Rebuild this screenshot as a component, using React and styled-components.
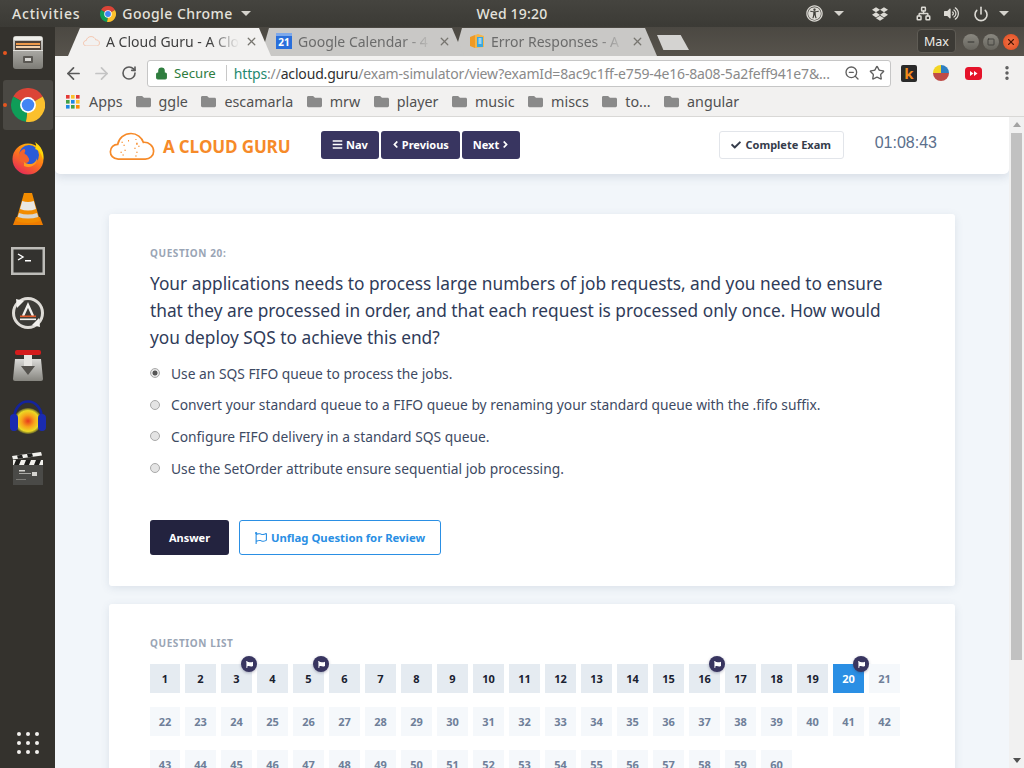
import React from 'react';
import styled, { createGlobalStyle } from 'styled-components';
import { FaAngleLeft, FaAngleRight, FaBars, FaCheck, FaDropbox, FaFlag, FaFolder, FaRegFlag, FaUniversalAccess, FaVolumeUp } from 'react-icons/fa';
import { ArrowLeft, ArrowRight, Lock, Minus, MoreVertical, Network, Power, RotateCw, Square, Star, X, ZoomOut } from 'lucide-react';

const UI_FONT = '"Noto Sans", "Open Sans", "Liberation Sans", sans-serif';

const GlobalStyle = createGlobalStyle`
  html, body {
    margin: 0;
    padding: 0;
    height: 100%;
    overflow: hidden;
    background: #34322d;
  }
  * { box-sizing: border-box; }
`;

// ---- small drawings ----

const ChromeLogo = ({ size }) => (
  <svg width={size} height={size} viewBox="0 0 24 24">
    <path d="M12 12 L1.6 6 A12 12 0 0 1 22.4 6 Z" fill="#db4437" />
    <path d="M12 12 L22.4 6 A12 12 0 0 1 10.5 23.9 Z" fill="#fbc02d" />
    <path d="M12 12 L10.5 23.9 A12 12 0 0 1 1.6 6 Z" fill="#0f9d58" />
    <circle cx="12" cy="12" r="5.6" fill="#fff" />
    <circle cx="12" cy="12" r="4.4" fill="#4285f4" />
  </svg>
);

const FilesIcon = () => (
  <svg width="34" height="36" viewBox="0 0 34 36">
    <defs>
      <linearGradient id="cab" x1="0" y1="0" x2="0" y2="1">
        <stop offset="0" stopColor="#d4d3cf" />
        <stop offset="0.45" stopColor="#a8a7a2" />
        <stop offset="1" stopColor="#7d7c76" />
      </linearGradient>
    </defs>
    <rect x="2" y="1" width="30" height="33" rx="3" fill="url(#cab)" />
    <rect x="3" y="2" width="28" height="3" fill="#eeeeea" />
    <rect x="4" y="6" width="26" height="9" fill="#4f4238" />
    <rect x="5" y="8" width="24" height="2" fill="#ef9a4a" />
    <rect x="5" y="11" width="24" height="2" fill="#f6d2ab" />
    <rect x="2" y="15" width="30" height="1" fill="#e4e3df" />
    <rect x="12" y="21" width="10" height="7" rx="1" fill="#5a5853" />
    <rect x="14" y="23" width="6" height="3" fill="#d8d7d3" />
  </svg>
);

const FirefoxIcon = () => (
  <svg width="34" height="35" viewBox="0 0 34 35">
    <defs>
      <linearGradient id="fx" x1="0.8" y1="0" x2="0.2" y2="1">
        <stop offset="0" stopColor="#ffcb00" />
        <stop offset="0.45" stopColor="#ff7a18" />
        <stop offset="1" stopColor="#e3245c" />
      </linearGradient>
    </defs>
    <circle cx="17" cy="19" r="15.5" fill="url(#fx)" />
    <circle cx="18" cy="15" r="10" fill="#2b5bd7" />
    <path d="M9 12 C13 7 15 9 14 12 C12 14 16 14 17 17 C21 22 14 25 10 22 C7 19 7 15 9 12 Z" fill="#f2622c" />
    <path d="M13 22 C18 26 25 24 26 18 C27 24 20 29 13 26 Z" fill="#ff9a1f" />
    <path d="M24 2 C30 6 34 13 32 20 C31 14 28 10 24 9 C26 7 25 4 24 2 Z" fill="#ffd60a" />
  </svg>
);

const VlcIcon = () => (
  <svg width="32" height="36" viewBox="0 0 32 36">
    <path d="M4 26 L1 34 H31 L28 26 Z" fill="#ef7d00" />
    <path d="M12 2 H20 L28 30 Q16 34 4 30 Z" fill="#f28c00" />
    <path d="M10.2 10 Q16 12 21.8 10 L24 18 Q16 21 8 18 Z" fill="#e9e7e2" />
    <path d="M7 22 Q16 25 25 22 L26.3 26 Q16 29 5.7 26 Z" fill="#d8d6d0" />
  </svg>
);

const TerminalIcon = () => (
  <svg width="34" height="28" viewBox="0 0 34 28">
    <rect width="34" height="28" fill="#bdbcb8" />
    <rect x="2.5" y="2.5" width="29" height="23" fill="#33322f" />
    <polyline points="7,7 12,10 7,13" fill="none" stroke="#fff" strokeWidth="1.4" />
    <rect x="14" y="13" width="6" height="1.5" fill="#fff" />
  </svg>
);

const UpdaterIcon = () => (
  <svg width="34" height="34" viewBox="0 0 34 34">
    <circle cx="17" cy="17" r="14.5" fill="#3c3b37" stroke="#dedcd7" strokeWidth="3" />
    <path d="M5 3 L13 5 L6 12 Z" fill="#f2f1ee" />
    <path d="M29 31 L21 29 L28 22 Z" fill="#f2f1ee" />
    <path d="M12 20 L17 9 L22 20" fill="none" stroke="#f2f1ee" strokeWidth="2.4" />
    <rect x="9" y="19.5" width="16" height="1.6" fill="#e05a2b" />
    <rect x="9" y="22.5" width="16" height="1.6" fill="#f2f1ee" />
  </svg>
);

const TransmissionIcon = () => (
  <svg width="32" height="34" viewBox="0 0 32 34">
    <defs>
      <linearGradient id="tr" x1="0" y1="0" x2="0" y2="1">
        <stop offset="0" stopColor="#dadad7" />
        <stop offset="1" stopColor="#86857f" />
      </linearGradient>
    </defs>
    <path d="M3 11 H29 L31 31 Q31 33 29 33 H3 Q1 33 1 31 Z" fill="url(#tr)" />
    <rect x="12" y="3" width="8" height="18" fill="#e6e5e1" />
    <rect x="3" y="2" width="26" height="5" rx="2" fill="#d41c1c" />
    <path d="M9 18 H23 L16 27 Z" fill="#55534e" />
  </svg>
);

const AudacityIcon = () => (
  <svg width="38" height="36" viewBox="0 0 38 36">
    <defs>
      <radialGradient id="au">
        <stop offset="0" stopColor="#e8391c" />
        <stop offset="0.45" stopColor="#f7a21a" />
        <stop offset="0.8" stopColor="#ecd924" />
        <stop offset="1" stopColor="#5b5a2a" />
      </radialGradient>
    </defs>
    <ellipse cx="19" cy="22" rx="14" ry="13" fill="url(#au)" />
    <path d="M5 22 C4 -4 34 -4 33 22" fill="none" stroke="#14239c" strokeWidth="2.6" />
    <rect x="1" y="15" width="8" height="17" rx="4" fill="#1a2bb0" />
    <rect x="29" y="15" width="8" height="17" rx="4" fill="#1a2bb0" />
  </svg>
);

const ClapperIcon = () => (
  <svg width="32" height="34" viewBox="0 0 32 34">
    <rect x="1" y="13" width="30" height="20" fill="#4a4a47" />
    <rect x="1" y="8" width="30" height="5" fill="#f1f0ec" />
    <path d="M4 8 H9 L7 13 H2 Z M14 8 H19 L17 13 H12 Z M24 8 H29 L27 13 H22 Z" fill="#1e1e1c" />
    <path d="M0 4 L29 0 L30 3.5 L1 7.5 Z" fill="#f1f0ec" />
    <path d="M5 3.4 L10 2.7 L11 6 L6 6.8 Z M15 2 L20 1.3 L21 4.6 L16 5.4 Z" fill="#1e1e1c" />
    <rect x="7" y="18" width="6" height="1.5" fill="#d5d4d0" />
    <rect x="7" y="21" width="12" height="1" fill="#aaa9a5" />
    <rect x="20" y="20" width="5" height="4" fill="#d5d4d0" />
    <rect x="4" y="27" width="10" height="1" fill="#7c7b77" />
  </svg>
);

const CloudOutline = ({ size, color, speckled }) => (
  <svg width={size} height={size * 0.62} viewBox="0 0 46 29">
    <path
      d="M9 27.5 C3.5 27.5 1 23.5 1 20 C1 15.5 4.5 12.5 8.5 12.5 C9.5 6.5 15 1.5 22 1.5 C28 1.5 33 5.5 34.5 10.5 C40 10 45 14 45 19.5 C45 24.5 41 27.5 36.5 27.5 Z"
      fill="none"
      stroke={color}
      strokeWidth="1.7"
    />
    {speckled && (
      <path
        d="M13 10 v1 M15 13 v1 M12 20 v1 M14 23 v1 M16 18 v1 M27 7 v1 M28 11 v2 M26 16 v1 M28 20 v1 M27 24 v1 M19 9 h1 M30 14 v1"
        stroke={color}
        strokeWidth="1.5"
      />
    )}
  </svg>
);

const CalendarFavicon = () => (
  <CalendarBox>21</CalendarBox>
);

const BoxFavicon = () => (
  <svg width="16" height="16" viewBox="0 0 16 16">
    <path d="M1 4 L6 2 L6 15 L1 13 Z" fill="#f09a24" />
    <path d="M6 2 L9 1 L15 3 L15 14 L6 15 Z" fill="#f5b54a" />
    <rect x="8" y="4" width="6" height="10" fill="#39a7e0" />
    <path d="M9.5 6 h3 M9.5 8 h3 M9.5 10 h3" stroke="#fff" strokeWidth="1" />
  </svg>
);

const AppsGrid = () => (
  <svg width="14" height="14" viewBox="0 0 14 14">
    {['#e53935', '#fbc02d', '#e53935', '#43a047', '#1e88e5', '#fbc02d', '#1e88e5', '#43a047', '#fb8c00'].map((c, i) => (
      <rect key={i} x={(i % 3) * 5} y={Math.floor(i / 3) * 5} width="3.6" height="3.6" fill={c} />
    ))}
  </svg>
);

const PieExtension = () => (
  <svg width="16" height="16" viewBox="0 0 16 16">
    <path d="M8 8 L0 8 A8 8 0 0 1 8 0 Z" fill="#f3d523" />
    <path d="M8 8 L8 0 A8 8 0 0 1 16 8 Z" fill="#2e7fc2" />
    <path d="M0 8 H16 A8 8 0 0 1 0 8 Z" fill="#bf4b47" />
  </svg>
);

const RedExtension = () => (
  <svg width="17" height="13" viewBox="0 0 17 13">
    <rect width="17" height="13" rx="3.5" fill="#e5132a" />
    <path d="M5 4 L8.5 6.5 L5 9 Z M9 4 L12.5 6.5 L9 9 Z" fill="#fff" />
  </svg>
);

const LOGO_LAUNCHER = [
  { key: 'files', icon: <FilesIcon />, running: true },
  { key: 'chrome', icon: <ChromeLogo size={34} />, running: true, active: true },
  { key: 'firefox', icon: <FirefoxIcon /> },
  { key: 'vlc', icon: <VlcIcon /> },
  { key: 'term', icon: <TerminalIcon /> },
  { key: 'updater', icon: <UpdaterIcon /> },
  { key: 'transmission', icon: <TransmissionIcon /> },
  { key: 'audacity', icon: <AudacityIcon /> },
  { key: 'clapper', icon: <ClapperIcon /> },
];

const BOOKMARKS = ['ggle', 'escamarla', 'mrw', 'player', 'music', 'miscs', 'to...', 'angular'];

const OPTIONS = [
  'Use an SQS FIFO queue to process the jobs.',
  'Convert your standard queue to a FIFO queue by renaming your standard queue with the .fifo suffix.',
  'Configure FIFO delivery in a standard SQS queue.',
  'Use the SetOrder attribute ensure sequential job processing.',
];

const FLAGGED = [3, 5, 16, 20];
const CURRENT = 20;
const QUESTIONS = Array.from({ length: 60 }, (_, i) => i + 1);

const App = () => (
  <>
    <GlobalStyle />
    <Desktop>
      <TopBar>
        <TopLeft>
          <TopLabel $spacing="0.8px">Activities</TopLabel>
          <AppMenu>
            <ChromeLogo size={16} />
            <TopLabel $spacing="0.45px">Google Chrome</TopLabel>
            <Caret />
          </AppMenu>
        </TopLeft>
        <TopLabel $spacing="0.2px">Wed 19:20</TopLabel>
        <TopRight>
          <FaUniversalAccess size={17} />
          <Caret />
          <TrayIcon $gap="28px"><FaDropbox size={16} /></TrayIcon>
          <TrayIcon $gap="28px"><Network size={15} strokeWidth={2.4} /></TrayIcon>
          <TrayIcon $gap="13px"><FaVolumeUp size={15} /></TrayIcon>
          <TrayIcon $gap="14px"><Power size={16} strokeWidth={2.4} /></TrayIcon>
          <TrayIcon $gap="8px"><Caret /></TrayIcon>
        </TopRight>
      </TopBar>

      <Workspace>
        <Launcher>
          {LOGO_LAUNCHER.map((item) => (
            <LauncherItem key={item.key} $active={item.active}>
              {item.running && <RunningDot />}
              {item.icon}
            </LauncherItem>
          ))}
          <AppGridDots>
            {Array.from({ length: 9 }, (_, i) => <span key={i} />)}
          </AppGridDots>
        </Launcher>

        <Browser>
          <TabStrip>
            <Tab $active $z={3}>
              <CloudOutline size={17} color="#f6b08c" />
              <TabTitle $active>A Cloud Guru - A Clo</TabTitle>
              <X size={13} color="#77756f" strokeWidth={2.4} />
            </Tab>
            <Tab $z={2}>
              <CalendarFavicon />
              <TabTitle>Google Calendar - 4</TabTitle>
              <X size={13} color="#77756f" strokeWidth={2.4} />
            </Tab>
            <Tab $z={1}>
              <BoxFavicon />
              <TabTitle>Error Responses - A</TabTitle>
              <X size={13} color="#77756f" strokeWidth={2.4} />
            </Tab>
            <NewTab />
            <MaxBadge>Max</MaxBadge>
            <WindowControls>
              <WindowButton><Minus size={10} color="#33322e" strokeWidth={2.4} /></WindowButton>
              <WindowButton><Square size={8} color="#33322e" strokeWidth={2.2} /></WindowButton>
              <WindowButton $close><X size={10} color="#4a1505" strokeWidth={2.6} /></WindowButton>
            </WindowControls>
          </TabStrip>

          <Toolbar>
            <NavIcon><ArrowLeft size={19} color="#5a5a5a" strokeWidth={2.2} /></NavIcon>
            <NavIcon><ArrowRight size={19} color="#c4c4c4" strokeWidth={2.2} /></NavIcon>
            <NavIcon><RotateCw size={16} color="#5a5a5a" strokeWidth={2.4} /></NavIcon>
            <Omnibox>
              <Lock size={13} color="#2f7d3f" fill="#2f7d3f" />
              <SecureLabel>Secure</SecureLabel>
              <OmniDivider />
              <Url>
                <UrlScheme>https</UrlScheme>://<UrlHost>acloud.guru</UrlHost>/exam-simulator/view?examId=8ac9c1ff-e759-4e16-8a08-5a2feff941e7&amp;...
              </Url>
              <ZoomOut size={16} color="#5f5f5f" />
              <Star size={16} color="#5f5f5f" />
            </Omnibox>
            <Extensions>
              <KBadge>k</KBadge>
              <PieExtension />
              <RedExtension />
              <MoreVertical size={18} color="#5a5a5a" strokeWidth={2.6} />
            </Extensions>
          </Toolbar>

          <BookmarkBar>
            <AppsGrid />
            <BookmarkApps>Apps</BookmarkApps>
            {BOOKMARKS.map((name) => (
              <Bookmark key={name}>
                <FaFolder size={15} color="#8a8a8a" />
                {name}
              </Bookmark>
            ))}
          </BookmarkBar>

          <Viewport>
            <Page>
              <SiteHeader>
                <Logo>
                  <CloudOutline size={46} color="#f68a29" speckled />
                  <LogoText>A CLOUD GURU</LogoText>
                </Logo>
                <HeaderNav>
                  <NavButton><FaBars size={11} />Nav</NavButton>
                  <NavButton><AngleLeft size={11} />Previous</NavButton>
                  <NavButton>Next<AngleRight size={11} /></NavButton>
                </HeaderNav>
                <CompleteButton><FaCheck size={10} />Complete Exam</CompleteButton>
                <Timer>01:08:43</Timer>
              </SiteHeader>

              <Content>
                <Card>
                  <Eyebrow>QUESTION 20:</Eyebrow>
                  <QuestionText>
                    Your applications needs to process large numbers of job requests, and you need to ensure that they are processed in order, and that each request is processed only once. How would you deploy SQS to achieve this end?
                  </QuestionText>
                  <OptionList>
                    {OPTIONS.map((option, i) => (
                      <Option key={option}>
                        <Radio $checked={i === 0} />
                        {option}
                      </Option>
                    ))}
                  </OptionList>
                  <Actions>
                    <AnswerButton>Answer</AnswerButton>
                    <FlagButton><FaRegFlag size={12} />Unflag Question for Review</FlagButton>
                  </Actions>
                </Card>

                <Card $list>
                  <Eyebrow>QUESTION LIST</Eyebrow>
                  <QuestionGrid>
                    {QUESTIONS.map((n) => (
                      <Cell key={n} $done={n < CURRENT} $current={n === CURRENT}>
                        {n}
                        {FLAGGED.includes(n) && <FlagBadge><FaFlag size={7} /></FlagBadge>}
                      </Cell>
                    ))}
                  </QuestionGrid>
                </Card>
              </Content>
            </Page>
            <Scrollbar>
              <ScrollArrow $up />
              <ScrollThumb />
              <ScrollArrow />
            </Scrollbar>
          </Viewport>
        </Browser>
      </Workspace>
    </Desktop>
  </>
);

// ---- desktop shell ----

const Desktop = styled.div`
  width: 1024px;
  height: 768px;
  display: flex;
  flex-direction: column;
  overflow: hidden;
  font-family: ${UI_FONT};
`;

const TopBar = styled.div`
  height: 27px;
  flex: none;
  display: grid;
  grid-template-columns: 1fr auto 1fr;
  align-items: center;
  padding: 0 12px;
  color: #e4e2dc;
  background: linear-gradient(#45443f, #3b3a35);
`;

const TopLeft = styled.div`
  display: flex;
  align-items: center;
  gap: 20px;
`;

const TopRight = styled.div`
  display: flex;
  align-items: center;
  justify-content: flex-end;
  color: #dcdad4;
  padding-right: 3px;

  > svg:first-child { margin-right: 9px; }
`;

const TrayIcon = styled.span`
  display: flex;
  margin-left: ${(p) => p.$gap};
`;

const AppMenu = styled.div`
  display: flex;
  align-items: center;
  gap: 6px;
`;

const TopLabel = styled.span`
  font-size: 14px;
  font-weight: 500;
  letter-spacing: ${(p) => p.$spacing};
`;

const Caret = styled.span`
  width: 0;
  height: 0;
  margin-left: 2px;
  border-left: 5px solid transparent;
  border-right: 5px solid transparent;
  border-top: 5px solid #d5d3cd;
`;

const Workspace = styled.div`
  flex: 1;
  min-height: 0;
  display: flex;
`;

const Launcher = styled.div`
  width: 55px;
  flex: none;
  display: flex;
  flex-direction: column;
  align-items: center;
  padding-bottom: 14px;
  background: #34322d;
`;

const LauncherItem = styled.div`
  position: relative;
  width: 50px;
  height: 50px;
  margin: 1px 0;
  display: flex;
  align-items: center;
  justify-content: center;
  border-radius: 3px;
  background: ${(p) => (p.$active ? '#4a4843' : 'transparent')};
`;

const RunningDot = styled.span`
  position: absolute;
  left: 0;
  top: 23px;
  width: 4px;
  height: 4px;
  border-radius: 50%;
  background: #e6561f;
`;

const AppGridDots = styled.div`
  margin-top: auto;
  display: grid;
  grid-template-columns: repeat(3, 4px);
  gap: 5px;

  span {
    width: 4px;
    height: 4px;
    border-radius: 50%;
    background: #f2f1ee;
  }
`;

// ---- browser chrome ----

const Browser = styled.div`
  flex: 1;
  min-width: 0;
  display: flex;
  flex-direction: column;
`;

const TabStrip = styled.div`
  height: 29px;
  flex: none;
  display: flex;
  align-items: flex-end;
  padding-left: 13px;
  background: linear-gradient(#4b4842, #57534c);
`;

const Tab = styled.div`
  position: relative;
  z-index: ${(p) => p.$z};
  width: 203px;
  height: 28px;
  flex: none;
  display: flex;
  align-items: center;
  gap: 6px;
  padding: 0 13px 2px 15px;
  margin-right: -10px;
  background: ${(p) => (p.$active ? '#f2f1f0' : '#c9c8c6')};
  clip-path: ${(p) =>
    p.$active
      ? 'polygon(0 100%, 12px 0, calc(100% - 12px) 0, 100% 100%)'
      : 'polygon(0 100%, 8px 0, calc(100% - 12px) 0, 100% 100%)'};
`;

const TabTitle = styled.span`
  flex: 1;
  min-width: 0;
  overflow: hidden;
  white-space: nowrap;
  font-size: 14px;
  color: ${(p) => (p.$active ? '#3f3f3f' : '#6b6b6b')};
  mask-image: linear-gradient(to right, #000 78%, transparent 100%);
`;

const CalendarBox = styled.span`
  width: 16px;
  height: 16px;
  flex: none;
  display: flex;
  align-items: flex-end;
  justify-content: center;
  font-size: 10px;
  font-weight: 700;
  line-height: 13px;
  color: #fff;
  background: #2a6fdb;
  border-top: 3px solid #7fa9ea;
`;

const NewTab = styled.div`
  width: 32px;
  height: 15px;
  flex: none;
  margin: 0 0 6px 10px;
  background: #d4d3d1;
  clip-path: polygon(0 0, 74% 0, 100% 100%, 20% 100%);
`;

const MaxBadge = styled.div`
  margin: 0 7px 3px auto;
  width: 39px;
  height: 24px;
  display: flex;
  align-items: center;
  justify-content: center;
  font-size: 12.5px;
  color: #eeece7;
  background: #3c3a35;
  border: 1px solid #5f5c55;
  border-radius: 4px;
`;

const WindowControls = styled.div`
  display: flex;
  gap: 4px;
  margin: 0 5px 6px 0;
`;

const WindowButton = styled.span`
  width: 16px;
  height: 16px;
  display: flex;
  align-items: center;
  justify-content: center;
  border-radius: 50%;
  background: ${(p) => (p.$close ? 'radial-gradient(#f4764a, #e0491d)' : 'linear-gradient(#8a8880, #66645d)')};
`;

const Toolbar = styled.div`
  height: 34px;
  flex: none;
  display: flex;
  align-items: center;
  padding-left: 4px;
  background: #f2f1f0;
`;

const NavIcon = styled.span`
  width: 28px;
  flex: none;
  display: flex;
  justify-content: center;
`;

const Omnibox = styled.div`
  width: 744px;
  height: 27px;
  flex: none;
  margin-left: 4px;
  display: flex;
  align-items: center;
  padding: 0 5px 0 7px;
  background: #fff;
  border: 1px solid #c6c6c6;
  border-radius: 3px;

  svg:last-child { margin-left: 9px; }
`;

const SecureLabel = styled.span`
  margin-left: 6px;
  font-size: 13.2px;
  color: #2f7d3f;
`;

const OmniDivider = styled.span`
  width: 1px;
  height: 16px;
  margin: 0 7px 0 10px;
  background: #c8c8c8;
`;

const Url = styled.span`
  flex: 1;
  min-width: 0;
  overflow: hidden;
  white-space: nowrap;
  font-size: 14px;
  letter-spacing: -0.17px;
  color: #8a8a8a;
`;

const UrlScheme = styled.span`
  color: #1f8a70;
`;

const UrlHost = styled.span`
  color: #303030;
`;

const Extensions = styled.div`
  flex: 1;
  display: flex;
  align-items: center;
  justify-content: space-between;
  padding: 0 8px 0 10px;
`;

const KBadge = styled.span`
  width: 16px;
  height: 17px;
  display: flex;
  align-items: center;
  justify-content: center;
  font-size: 15px;
  font-weight: 700;
  line-height: 1;
  color: #f28a1c;
  background: #2a2a2a;
  border-radius: 2px;
`;

const BookmarkBar = styled.div`
  height: 27px;
  flex: none;
  display: flex;
  align-items: center;
  padding: 0 0 3px 11px;
  font-size: 14.3px;
  color: #505050;
  background: #f2f1f0;
  border-bottom: 1px solid #d9d8d6;
`;

const BookmarkApps = styled.span`
  margin: 0 13px 0 9px;
`;

const Bookmark = styled.span`
  display: flex;
  align-items: center;
  gap: 8px;
  margin-right: 13.5px;
`;

// ---- page ----

const Viewport = styled.div`
  flex: 1;
  min-height: 0;
  display: flex;
`;

const Page = styled.div`
  width: 954px;
  flex: none;
  overflow: hidden;
  background: #f2f6fa;
`;

const SiteHeader = styled.div`
  height: 57px;
  display: flex;
  align-items: center;
  padding: 0 72px 2px 54px;
  background: #fff;
  border-radius: 0 0 5px 5px;
  box-shadow: 0 3px 10px rgba(70, 90, 120, 0.16);
`;

const Logo = styled.div`
  width: 212px;
  flex: none;
  display: flex;
  align-items: center;
  gap: 8px;
  padding-top: 4px;
`;

const LogoText = styled.span`
  font-family: "Open Sans", sans-serif;
  font-size: 17px;
  font-weight: 700;
  letter-spacing: -0.15px;
  color: #f68a29;
`;

const HeaderNav = styled.div`
  display: flex;
  gap: 2px;
`;

const NavButton = styled.button`
  height: 28px;
  display: flex;
  align-items: center;
  gap: 3px;
  padding: 0 11px;
  font-family: ${UI_FONT};
  font-size: 11px;
  font-weight: 700;
  color: #fff;
  background: #383560;
  border: none;
  border-radius: 3px;
`;

// the angle glyphs sit in a square box with a lot of air round them
const AngleLeft = styled(FaAngleLeft)`
  margin: 0 -2px;
`;

const AngleRight = styled(FaAngleRight)`
  margin: 0 -2px;
`;

const CompleteButton = styled.button`
  width: 125px;
  height: 28px;
  margin-left: auto;
  display: flex;
  align-items: center;
  justify-content: center;
  gap: 4px;
  font-family: ${UI_FONT};
  font-size: 11px;
  font-weight: 700;
  color: #353c4b;
  background: #fff;
  border: 1px solid #e2e5ea;
  border-radius: 3px;
`;

const Timer = styled.span`
  margin: 0 0 3px 31px;
  font-family: "Liberation Sans", sans-serif;
  font-size: 16px;
  color: #5b6f8c;
`;

const Content = styled.div`
  display: flex;
  flex-direction: column;
  gap: 18px;
  padding: 40px 54px 0;
`;

const Card = styled.section`
  height: ${(p) => (p.$list ? '220px' : '372px')};
  padding: 33px 41px 0;
  background: #fff;
  border-radius: 3px;
  box-shadow: 0 2px 8px rgba(70, 90, 120, 0.13);
`;

const Eyebrow = styled.div`
  font-size: 10px;
  font-weight: 700;
  line-height: 12px;
  letter-spacing: 0.6px;
  color: #9aa5b5;
`;

const QuestionText = styled.p`
  margin: 11px 0 0;
  font-size: 17.3px;
  line-height: 27px;
  color: #2f3b59;
`;

const OptionList = styled.div`
  margin-top: 12px;
  display: flex;
  flex-direction: column;
  gap: 11.7px;
`;

const Option = styled.label`
  height: 20px;
  display: flex;
  align-items: center;
  gap: 11px;
  font-size: 13.8px;
  color: #3d4a63;
`;

const Radio = styled.span`
  width: 10px;
  height: 10px;
  flex: none;
  border-radius: 50%;
  border: 1px solid #a9a9a9;
  background: ${(p) => (p.$checked ? 'radial-gradient(#555 0 2.2px, #e2e2e2 2.8px)' : '#e4e4e4')};
`;

const Actions = styled.div`
  margin-top: 42px;
  display: flex;
  gap: 10px;
`;

const AnswerButton = styled.button`
  width: 79px;
  height: 35px;
  font-family: ${UI_FONT};
  font-size: 11px;
  font-weight: 700;
  color: #fff;
  background: #23233f;
  border: none;
  border-radius: 3px;
`;

const FlagButton = styled.button`
  width: 202px;
  height: 35px;
  display: flex;
  align-items: center;
  justify-content: center;
  gap: 4px;
  font-family: ${UI_FONT};
  font-size: 11.3px;
  font-weight: 700;
  color: #2a8fe4;
  background: #fff;
  border: 1px solid #2a8fe4;
  border-radius: 3px;
`;

const QuestionGrid = styled.div`
  margin-top: 15px;
  display: grid;
  grid-template-columns: 30px repeat(20, 31px);
  grid-auto-rows: 29px;
  gap: 14px 5px;
`;

const Cell = styled.div`
  position: relative;
  display: flex;
  align-items: center;
  justify-content: center;
  font-family: "Open Sans", sans-serif;
  font-size: 11px;
  font-weight: 700;
  color: ${(p) => (p.$current ? '#fff' : p.$done ? '#1a2130' : '#6f7f99')};
  background: ${(p) => (p.$current ? '#2a8fe4' : p.$done ? '#e5ebf1' : '#f5f8fb')};
`;

const FlagBadge = styled.span`
  position: absolute;
  top: -8px;
  right: -5px;
  width: 16px;
  height: 16px;
  display: flex;
  align-items: center;
  justify-content: center;
  color: #fff;
  background: #383560;
  border-radius: 50%;
  box-shadow: 0 1px 3px rgba(40, 40, 80, 0.35);
`;

// ---- scrollbar ----

const Scrollbar = styled.div`
  flex: 1;
  display: flex;
  flex-direction: column;
  align-items: center;
  background: #f1f1f1;
`;

const ScrollArrow = styled.span`
  width: 0;
  height: 0;
  margin: ${(p) => (p.$up ? '5px 0 6px' : 'auto 0 5px')};
  border-left: 4px solid transparent;
  border-right: 4px solid transparent;
  ${(p) => (p.$up ? 'border-bottom: 5px solid #a3a3a3;' : 'border-top: 5px solid #505050;')}
`;

const ScrollThumb = styled.div`
  width: 11px;
  height: 527px;
  background: #c1c1c1;
`;

export default App;
